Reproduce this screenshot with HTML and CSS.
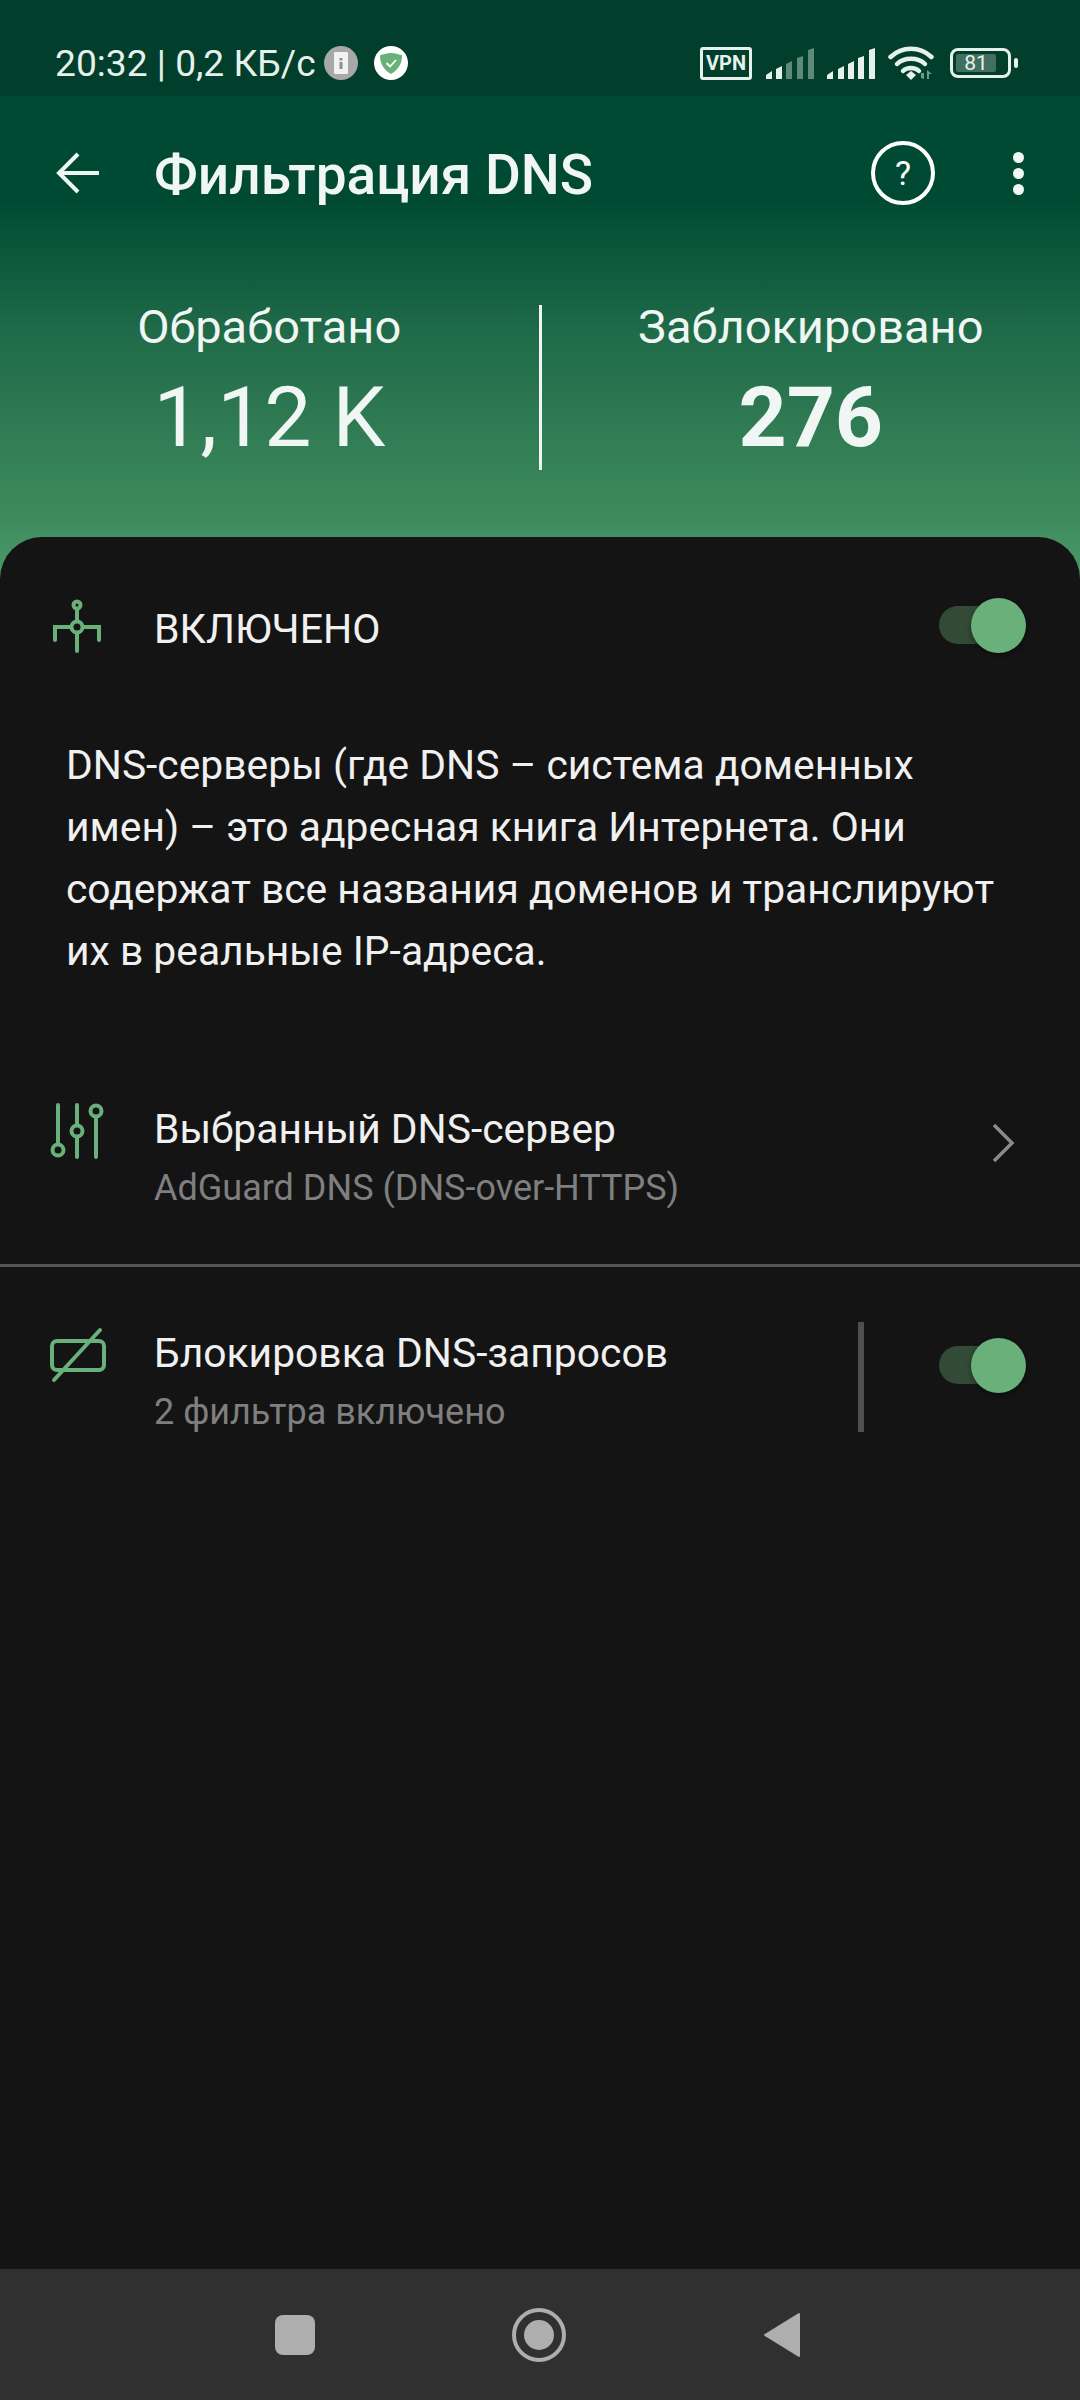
FILE: index.html
```html
<!DOCTYPE html>
<html lang="ru">
<head>
    <meta charset="UTF-8">
    <meta name="viewport" content="width=device-width, initial-scale=1.0">
    <title>Фильтрация DNS</title>
    <link rel="stylesheet" href="styles.css">
</head>
<body>
    <header class="hero">
        <div class="status-bar">
            <div class="status-left">
                <span class="status-text">20:32 | 0,2 КБ/с</span>
                <svg class="notif notif-info" viewBox="0 0 34 34">
                    <circle cx="17" cy="17" r="17" fill="#a6a9a8"/>
                    <rect x="10" y="6" width="14" height="22" rx="1" fill="#f2f2f2"/>
                    <rect x="15.500" y="12" width="3" height="2.500" fill="#8c8f8e"/>
                    <rect x="15.500" y="16" width="3" height="7" fill="#8c8f8e"/>
                </svg>
                <svg class="notif notif-guard" viewBox="0 0 34 34">
                    <circle cx="17" cy="17" r="17" fill="#fff"/>
                    <path d="M17 7c-4 0-7 1-11 2.300 0 8 3 14 11 18.700 8-4.700 11-10.700 11-18.700C24 8 21 7 17 7z" fill="#67b279"/>
                    <path d="M12.500 17l3.500 3.500 6-6.500" fill="none" stroke="#fff" stroke-width="1.800"/>
                </svg>
            </div>
            <div class="status-right">
                <span class="vpn-badge">VPN</span>
                <svg class="signal" viewBox="0 0 48 32">
                    <g fill="#e6f1ec">
                        <path d="M0 32v-4l6-4v8z"/>
                        <path d="M10 32v-10l6-3v13z"/>
                    </g>
                    <g fill="#5d8b78">
                        <path d="M20 32v-15l6-3v18z"/>
                        <path d="M31 32v-21l6-2v23z"/>
                        <path d="M42 32v-29l6-2v31z"/>
                    </g>
                </svg>
                <svg class="signal" viewBox="0 0 48 32">
                    <path d="M0 32v-4l6-4v8zM11 32v-10l6-3v13zM21 32v-15l6-3v18zM31 32v-21l6-2v23zM42 32v-29l6-2v31z" fill="#e6f1ec"/>
                </svg>
                <svg class="wifi" viewBox="0 0 46 34">
                    <g fill="none" stroke="#e6f1ec" stroke-width="4.500" stroke-linecap="round">
                        <path d="M2.500 11C14 0 32 0 43.500 11"/>
                        <path d="M9 18C16 11 30 11 37 18"/>
                        <path d="M15 25C19 21 27 21 31 25"/>
                    </g>
                    <path d="M18 29l5-4 5 4-5 5z" fill="#e6f1ec"/>
                    <path d="M33 27v5l3 1v-6zM39 24v9h2v-5l3 0z" fill="#6f978a"/>
                </svg>
                <div class="battery">
                    <div class="battery-body">
                        <span class="battery-level">81</span>
                    </div>
                    <span class="battery-nub"></span>
                </div>
            </div>
        </div>

        <div class="toolbar">
            <svg class="back-icon" viewBox="0 0 44 42">
                <path d="M43 21H3M22 2L3 21l19 19" fill="none" stroke="#eff6f3" stroke-width="4"/>
            </svg>
            <h1 class="toolbar-title">Фильтрация DNS</h1>
            <span class="help-btn">?</span>
            <div class="more-btn">
                <span class="more-dot"></span>
                <span class="more-dot"></span>
                <span class="more-dot"></span>
            </div>
        </div>

        <div class="stats">
            <div class="stat">
                <div class="stat-label">Обработано</div>
                <div class="stat-value">1,12 K</div>
            </div>
            <div class="stat-divider"></div>
            <div class="stat">
                <div class="stat-label">Заблокировано</div>
                <div class="stat-value stat-value-bold">276</div>
            </div>
        </div>
    </header>

    <main class="sheet">
        <div class="enabled-row">
            <svg class="row-icon" viewBox="0 0 60 60">
                <g fill="none" stroke="#69b07a" stroke-width="4" stroke-linecap="round">
                    <circle cx="30" cy="10" r="3.500"/>
                    <path d="M30 14v11M30 39v17"/>
                    <circle cx="30" cy="32" r="5.500"/>
                    <path d="M8 45V32h16M52 45V32H36"/>
                </g>
            </svg>
            <span class="enabled-label">ВКЛЮЧЕНО</span>
            <div class="toggle"><span class="toggle-thumb"></span></div>
        </div>

        <p class="description">DNS-серверы (где DNS – система доменных имен) – это адресная книга Интернета. Они содержат все названия доменов и транслируют их в реальные IP-адреса.</p>

        <div class="setting-row setting-server">
            <svg class="row-icon" viewBox="0 0 60 60">
                <g fill="none" stroke="#69b07a" stroke-width="4" stroke-linecap="round">
                    <path d="M11 4v38M30 4v19M30 37v19M49 17v39"/>
                    <circle cx="11" cy="49" r="5.500"/>
                    <circle cx="30" cy="30" r="5.500"/>
                    <circle cx="49" cy="10" r="5.500"/>
                </g>
            </svg>
            <div class="setting-text">
                <div class="setting-title">Выбранный DNS-сервер</div>
                <div class="setting-sub">AdGuard DNS (DNS-over-HTTPS)</div>
            </div>
            <svg class="chevron" viewBox="0 0 24 40">
                <path d="M3 2l18 18L3 38" fill="none" stroke="#8a8a8a" stroke-width="3.500"/>
            </svg>
        </div>

        <div class="row-divider"></div>

        <div class="setting-row setting-block">
            <svg class="row-icon" viewBox="0 0 60 60">
                <g fill="none" stroke="#69b07a" stroke-width="4" stroke-linecap="round">
                    <rect x="5" y="16" width="52" height="29" rx="5"/>
                    <path d="M53 5L7 55"/>
                </g>
            </svg>
            <div class="setting-text">
                <div class="setting-title">Блокировка DNS-запросов</div>
                <div class="setting-sub">2 фильтра включено</div>
            </div>
            <div class="setting-divider"></div>
            <div class="toggle toggle-raised"><span class="toggle-thumb"></span></div>
        </div>
    </main>

    <nav class="nav-bar">
        <span class="nav-square"></span>
        <span class="nav-circle"><span class="nav-circle-inner"></span></span>
        <svg class="nav-back" viewBox="0 0 38 46">
            <path d="M36 2v42L2 23z" fill="#aeaeae" stroke="#aeaeae" stroke-width="2" stroke-linejoin="round"/>
        </svg>
    </nav>
</body>
</html>
```

FILE: styles.css
```css
* {
    margin: 0;
    padding: 0;
    box-sizing: border-box;
}

body {
    width: 1080px;
    height: 2400px;
    overflow: hidden;
    font-family: Roboto, 'Noto Sans', sans-serif;
    background: #141414;
    display: flex;
    flex-direction: column;
}

/* Green top part */
.hero {
    height: 580px;
    background: linear-gradient(180deg, #004a33 0px, #004a33 200px, #1f6a48 330px, #3f8b5e 520px, #4a9a68 580px);
    color: #eff6f3;
}

.status-bar {
    height: 96px;
    background: #013e2b;
    display: flex;
    justify-content: space-between;
    align-items: center;
    padding: 30px 62px 0 55px;
}

.status-left,
.status-right {
    display: flex;
    align-items: center;
}

.status-text {
    font-size: 37.200px;
    color: #e6f1ec;
    margin-right: 8px;
}

.notif {
    width: 34px;
    height: 34px;
}

.notif-guard {
    margin-left: 16px;
}

.vpn-badge {
    width: 52px;
    height: 33px;
    border: 3px solid #e6f1ec;
    border-radius: 3px;
    font-size: 20px;
    font-weight: 700;
    line-height: 27px;
    text-align: center;
    color: #e6f1ec;
    margin-right: 14px;
}

.signal {
    width: 48px;
    height: 32px;
    margin-right: 13px;
}

.wifi {
    width: 46px;
    height: 34px;
    margin-right: 16px;
}

.battery {
    display: flex;
    align-items: center;
}

.battery-body {
    width: 61px;
    height: 30px;
    border: 3px solid #e6f1ec;
    border-radius: 8px;
    padding: 3px 3px;
}

.battery-level {
    display: block;
    width: 40px;
    height: 18px;
    background: #41705e;
    border-radius: 2px;
    font-size: 21px;
    line-height: 19px;
    text-align: center;
    color: #e6f1ec;
}

.battery-nub {
    width: 4px;
    height: 10px;
    margin-left: 3px;
    background: #e6f1ec;
    border-radius: 2px;
}

.toolbar {
    height: 154px;
    display: flex;
    align-items: center;
    padding: 0 56px;
}

.back-icon {
    width: 44px;
    height: 42px;
    flex-shrink: 0;
}

.toolbar-title {
    font-size: 55px;
    font-weight: 500;
    margin-left: 54px;
    margin-top: 3px;
    flex: 1;
}

.help-btn {
    width: 64px;
    height: 64px;
    border: 4px solid #fff;
    border-radius: 50%;
    font-size: 34px;
    line-height: 56px;
    text-align: center;
    color: #fff;
    margin-right: 78px;
}

.more-btn {
    display: flex;
    flex-direction: column;
    gap: 5px;
    width: 11px;
}

.more-dot {
    width: 11px;
    height: 11px;
    border-radius: 50%;
    background: #eff6f3;
}

.stats {
    display: flex;
    align-items: center;
    padding-top: 50px;
}

.stat {
    flex: 1;
    text-align: center;
    padding-bottom: 7px;
}

.stat-label {
    font-size: 47px;
    line-height: 54px;
}

.stat-value {
    font-size: 84px;
    line-height: 100px;
    margin-top: 14px;
}

.stat-value-bold {
    font-weight: 700;
}

.stat-divider {
    width: 3px;
    height: 165px;
    background: #eff6f3;
}

/* Dark sheet */
.sheet {
    flex: 1;
    margin-top: -43px;
    background: #141414;
    border-radius: 42px 42px 0 0;
    color: #f0f0f0;
}

.enabled-row {
    display: flex;
    align-items: center;
    height: 60px;
    margin-top: 58px;
    padding-right: 69px;
}

.row-icon {
    width: 60px;
    height: 60px;
    margin-left: 47px;
    margin-right: 47px;
    flex-shrink: 0;
}

.enabled-label {
    font-size: 41px;
    margin-top: 8px;
    flex: 1;
}

.toggle {
    position: relative;
    width: 72px;
    height: 38px;
    border-radius: 19px;
    background: #324a36;
}

.toggle-raised {
    margin-bottom: 30px;
}

.toggle-thumb {
    position: absolute;
    top: -8px;
    right: -15px;
    width: 55px;
    height: 55px;
    border-radius: 50%;
    background: #69b07a;
    box-shadow: 0 2px 5px rgba(0, 0, 0, 0.4);
}

.description {
    font-size: 40.800px;
    line-height: 62px;
    padding: 0 66px;
    margin-top: 79px;
}

.setting-row {
    display: flex;
    align-items: center;
    height: 120px;
}

.setting-row .row-icon {
    align-self: flex-start;
    margin-top: 5px;
}

.setting-server {
    margin-top: 114px;
    padding-right: 65px;
}

.setting-block {
    margin-top: 53px;
    padding-right: 69px;
}

.setting-text {
    flex: 1;
}

.setting-title {
    font-size: 40.800px;
    line-height: 50px;
}

.setting-sub {
    font-size: 36px;
    line-height: 40px;
    margin-top: 14px;
    color: #7f7f7f;
}

.chevron {
    width: 24px;
    height: 40px;
    margin-bottom: 26px;
}

.row-divider {
    height: 3px;
    margin-top: 48px;
    background: #555;
}

.setting-divider {
    width: 6px;
    height: 110px;
    background: #4f4f4f;
    margin-right: 75px;
    margin-bottom: 6px;
}

.nav-bar {
    height: 131px;
    background: #303030;
    display: flex;
    align-items: center;
}

.nav-square {
    width: 40px;
    height: 40px;
    margin-left: 275px;
    border-radius: 8px;
    background: #aeaeae;
}

.nav-circle {
    width: 54px;
    height: 54px;
    margin-left: 197px;
    border: 4px solid #aeaeae;
    border-radius: 50%;
    display: flex;
    align-items: center;
    justify-content: center;
}

.nav-circle-inner {
    width: 30px;
    height: 30px;
    border-radius: 50%;
    background: #aeaeae;
}

.nav-back {
    width: 38px;
    height: 46px;
    margin-left: 197px;
}
```
